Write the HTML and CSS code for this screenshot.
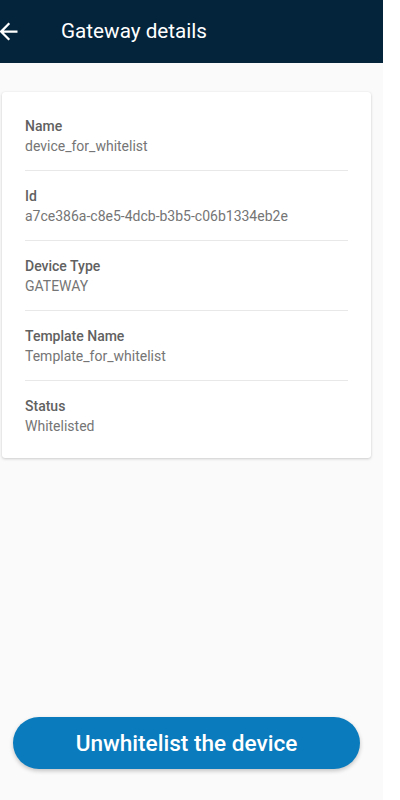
FILE: index.html
```html
<!DOCTYPE html>
<html>
<head>
<meta charset="utf-8">
<link rel="stylesheet" href="styles.css">
</head>
<body>
<div class="app">
  <header class="topbar">
    <svg class="back" viewBox="0 0 24 24" width="27" height="27"><path fill="#fff" d="M20 11H7.83l5.59-5.59L12 4l-8 8 8 8 1.41-1.41L7.83 13H20v-2z"/></svg>
    <h1 class="title">Gateway details</h1>
  </header>
  <main class="content">
    <section class="card">
      <div class="row"><div class="label">Name</div><div class="value">device_for_whitelist</div></div>
      <div class="row"><div class="label">Id</div><div class="value">a7ce386a-c8e5-4dcb-b3b5-c06b1334eb2e</div></div>
      <div class="row"><div class="label">Device Type</div><div class="value">GATEWAY</div></div>
      <div class="row"><div class="label">Template Name</div><div class="value">Template_for_whitelist</div></div>
      <div class="row last"><div class="label">Status</div><div class="value">Whitelisted</div></div>
    </section>
  </main>
  <button class="action">Unwhitelist the device</button>
</div>
</body>
</html>
```
FILE: styles.css
```css
html, body {
  margin: 0;
  padding: 0;
  background: #ffffff;
  font-family: Roboto, "Noto Sans", Arial, sans-serif;
}
.app {
  width: 383px;
  height: 800px;
  background: #fafafa;
  display: flex;
  flex-direction: column;
}
.topbar {
  height: 63px;
  background: #03243b;
  display: flex;
  align-items: center;
  flex-shrink: 0;
}
.back {
  margin-left: -5px;
  margin-top: -1px;
  flex-shrink: 0;
}
.title {
  margin: -2px 0 0 39px;
  font-size: 20.7px;
  font-weight: 400;
  color: #ffffff;
}
.content {
  padding: 29px 12px 0 2px;
}
.card {
  background: #ffffff;
  border-radius: 3px;
  box-shadow: 0 1px 3px rgba(0,0,0,0.18), 0 0 1px rgba(0,0,0,0.08);
  padding: 9px 23px 8px 23px;
}
.row {
  padding: 15px 0 14px 0;
  border-bottom: 1px solid #e8e8e8;
}
.row.last {
  border-bottom: none;
}
.label {
  font-size: 14px;
  line-height: 20px;
  font-weight: 500;
  color: #616161;
}
.value {
  font-size: 14px;
  line-height: 20px;
  font-weight: 400;
  color: #757575;
}
.action {
  margin: auto 23px 31px 13px;
  height: 52px;
  border: none;
  border-radius: 26px;
  background: #0a7bbd;
  color: #ffffff;
  font-family: Roboto, "Noto Sans", Arial, sans-serif;
  font-size: 22.6px;
  font-weight: 500;
  box-shadow: 0 2px 4px rgba(0,0,0,0.22);
  padding: 0;
}
```
